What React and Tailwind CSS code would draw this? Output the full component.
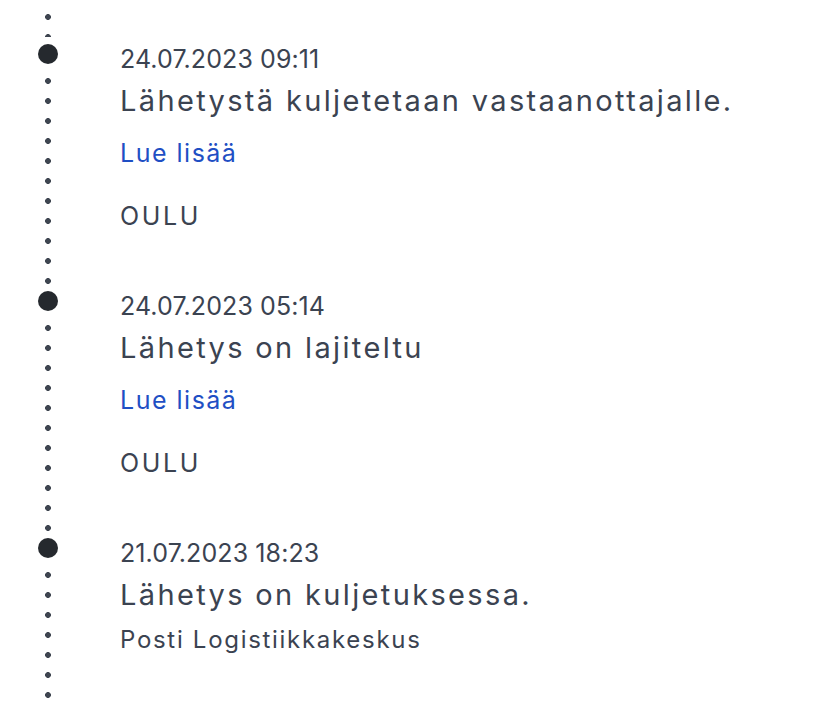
import React from 'react';

const events = [
  {
    date: '24.07.2023 09:11',
    title: 'Lähetystä kuljetetaan vastaanottajalle.',
    link: true,
    place: 'OULU',
  },
  {
    date: '24.07.2023 05:14',
    title: 'Lähetys on lajiteltu',
    link: true,
    place: 'OULU',
  },
  {
    date: '21.07.2023 18:23',
    title: 'Lähetys on kuljetuksessa.',
    note: 'Posti Logistiikkakeskus',
  },
];

const Dots = ({ className }) => (
  <div
    className={
      'w-5 bg-[radial-gradient(circle,#3e4550_2.6px,transparent_3.2px)] bg-[length:20px_20px] bg-repeat-y ' +
      className
    }
  />
);

const Event = ({ item }) => (
  <li className="flex h-[247px]">
    <div className="w-[96px] flex flex-col items-center shrink-0">
      <div className="w-5 h-5 rounded-full bg-[#25292e]" />
      <Dots className="mt-[7px] h-[220px]" />
    </div>
    <div className="pl-6 text-[#3b4351]">
      <p className="mt-[1px] text-[25px] leading-[28px] tracking-[0.1px]">{item.date}</p>
      <h3 className="mt-[11px] text-[29px] leading-[34px] tracking-[2.35px]">{item.title}</h3>
      {item.link && (
        <a href="#" className="block mt-[21px] text-[25px] leading-[28px] tracking-[1.5px] text-[#1f4fc4]">
          Lue lisää
        </a>
      )}
      {item.place && <p className="mt-[35px] text-[25px] leading-[28px] tracking-[2.6px]">{item.place}</p>}
      {item.note && <p className="mt-[14px] text-[24px] leading-[28px] tracking-[1.7px]">{item.note}</p>}
    </div>
  </li>
);

export default function App() {
  return (
    <div className="w-[816px] h-[706px] overflow-hidden bg-white font-['Inter',sans-serif]">
      <div className="w-[96px] flex justify-center">
        <Dots className="h-[37px] bg-[position:0_-13px]" />
      </div>
      <ol className="mt-[7px]">
        {events.map((e) => (
          <Event key={e.date} item={e} />
        ))}
      </ol>
    </div>
  );
}
